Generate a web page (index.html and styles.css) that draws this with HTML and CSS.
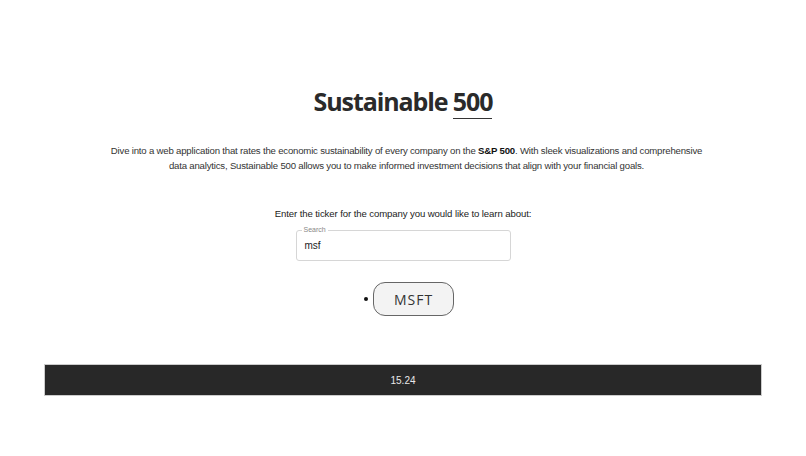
FILE: index.html
```html
<!DOCTYPE html>
<html>
<head>
<meta charset="utf-8">
<link rel="stylesheet" href="styles.css">
</head>
<body>
<main class="page">
  <h1 class="title">Sustainable <span class="accent">500</span></h1>
  <p class="intro">Dive into a web application that rates the economic sustainability of every company on the <b>S&amp;P 500</b>. With sleek visualizations and comprehensive<br>data analytics, Sustainable 500 allows you to make informed investment decisions that align with your financial goals.</p>
  <p class="prompt">Enter the ticker for the company you would like to learn about:</p>
  <div class="search">
    <span class="legend">Search</span>
    <span class="value">msf</span>
  </div>
  <ul class="results">
    <li class="result"><button class="ticker">MSFT</button></li>
  </ul>
  <div class="bar">15.24</div>
</main>
</body>
</html>
```

FILE: styles.css
```css
* { box-sizing: border-box; }
html, body { margin: 0; padding: 0; background: #fff; }
body { font-family: "Liberation Sans", Arial, sans-serif; color: #222; }
.page { display: flex; flex-direction: column; align-items: center; padding-top: 83px; }
.title {
  font-family: "Open Sans", "Noto Sans", sans-serif;
  font-weight: 700;
  font-size: 25px;
  letter-spacing: -1.1px;
  color: #2a2a2a;
  margin: 0;
  line-height: 36px;
}
.accent { border-bottom: 1.5px solid #333; padding-bottom: 0; }
.intro {
  margin: 24px 0 0;
  padding-left: 7px;
  font-size: 9.6px;
  letter-spacing: -0.19px;
  line-height: 15px;
  text-align: center;
  color: #333;
}
.intro b { font-weight: 700; color: #111; }
.prompt { margin: 34px 0 0; font-size: 9.6px; letter-spacing: -0.1px; line-height: 14px; color: #222; }
.search {
  position: relative;
  margin: 9px 0 0;
  width: 215px;
  height: 31px;
  border: 1px solid #d6d6d6;
  border-radius: 3px;
  padding: 0 8px;
  display: flex;
  align-items: center;
}
.search .legend {
  position: absolute;
  top: -5px;
  left: 5px;
  background: #fff;
  font-size: 7px;
  color: #888;
  padding: 0 2px;
  line-height: 8px;
}
.search .value { font-size: 10px; color: #222; }
.results { margin: 21px 0 0; padding: 0 0 0 12px; list-style: none; }
.result { display: flex; align-items: center; gap: 5px; }
.result::before {
  content: "";
  width: 4px;
  height: 4px;
  border-radius: 50%;
  background: #111;
}
.ticker {
  width: 81px;
  height: 34px;
  border: 1px solid #666;
  border-radius: 12px;
  background: #f3f3f3;
  font-family: "Open Sans", "Noto Sans", sans-serif;
  font-size: 14px;
  letter-spacing: 1px;
  color: #333;
  padding: 0;
}
.bar {
  align-self: stretch;
  margin: 48px 44px 0 44px;
  height: 32px;
  background: #282828;
  border: 1px solid #ccc;
  color: #e8e8e8;
  font-size: 10px;
  display: flex;
  align-items: center;
  justify-content: center;
}
```
